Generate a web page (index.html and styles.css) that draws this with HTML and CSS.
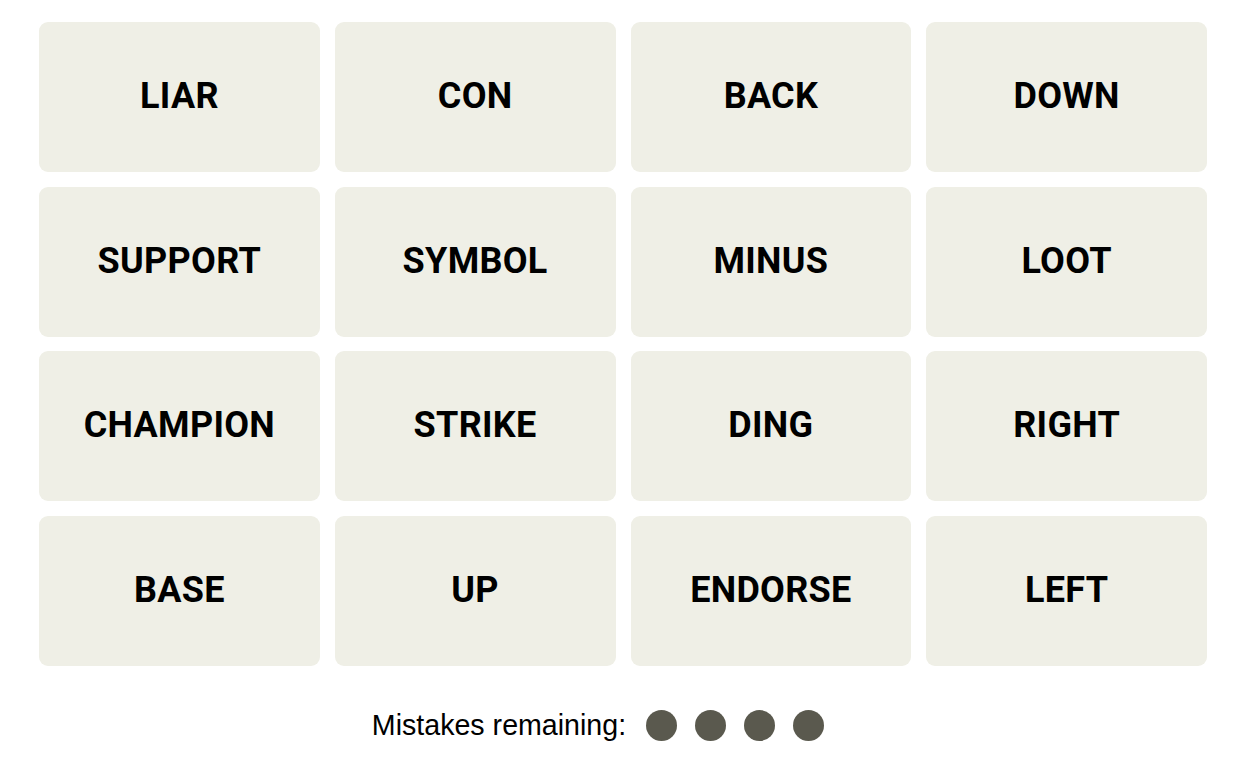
FILE: index.html
```html
<!DOCTYPE html>
<html lang="en">
<head>
    <meta charset="UTF-8">
    <meta name="viewport" content="width=device-width, initial-scale=1.0">
    <title>Connections</title>
    <link rel="stylesheet" href="styles.css">
</head>
<body>
    <div class="board">
        <div class="tile">LIAR</div>
        <div class="tile">CON</div>
        <div class="tile">BACK</div>
        <div class="tile">DOWN</div>
        <div class="tile">SUPPORT</div>
        <div class="tile">SYMBOL</div>
        <div class="tile">MINUS</div>
        <div class="tile">LOOT</div>
        <div class="tile">CHAMPION</div>
        <div class="tile">STRIKE</div>
        <div class="tile">DING</div>
        <div class="tile">RIGHT</div>
        <div class="tile">BASE</div>
        <div class="tile">UP</div>
        <div class="tile">ENDORSE</div>
        <div class="tile">LEFT</div>
    </div>

    <!-- mistakes left -->
    <div class="mistakes">
        <span class="label">Mistakes remaining:</span>
        <div class="dots">
            <span class="dot"></span>
            <span class="dot"></span>
            <span class="dot"></span>
            <span class="dot"></span>
        </div>
    </div>
</body>
</html>
```

FILE: styles.css
```css
body {
    margin: 0;
    padding: 22px 0 0 39px;
    background-color: #fff;
    color: #000;
    font-family: "Liberation Sans", Arial, sans-serif;
}

.board {
    width: 1168px;
    display: grid;
    grid-template-columns: repeat(4, 1fr);
    grid-auto-rows: 150px;
    column-gap: 15px;
    row-gap: 14.67px;
}

.tile {
    background-color: #efefe6;
    border-radius: 9px;
    display: flex;
    align-items: center;
    justify-content: center;
    padding-bottom: 2px;
    box-sizing: border-box;
    font-family: Roboto, "Liberation Sans", sans-serif;
    font-weight: 700;
    font-size: 36px;
    letter-spacing: 0.3px;
}

.mistakes {
    width: 1168px;
    margin-top: 44px;
    display: flex;
    justify-content: center;
    align-items: center;
    gap: 20px;
    padding-right: 50px;
    box-sizing: border-box;
}

    .mistakes .label {
        font-size: 28.6px;
        line-height: 31px;
    }

.dots {
    display: flex;
    gap: 18px;
}

    .dots .dot {
        width: 31px;
        height: 31px;
        border-radius: 50%;
        background-color: #5a594e;
    }
```
